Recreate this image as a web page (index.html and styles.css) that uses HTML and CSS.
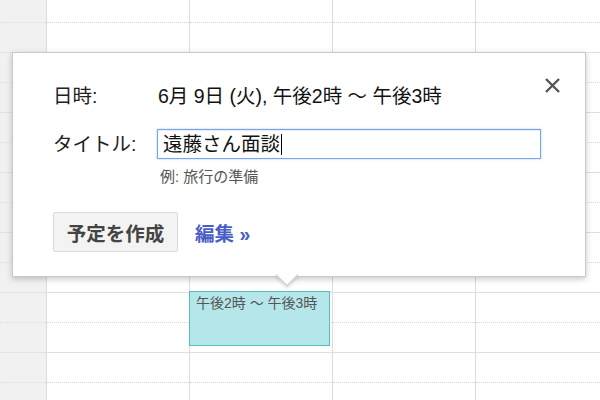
FILE: index.html
```html
<!DOCTYPE html>
<html lang="ja">
<head>
<meta charset="utf-8">
<link rel="stylesheet" href="styles.css">
</head>
<body>
<div class="cal">
  <div class="gutter">
    <div class="hour"><div class="half"></div></div>
    <div class="hour"><div class="half"></div></div>
    <div class="hour"><div class="half"></div></div>
    <div class="hour"><div class="half"></div></div>
    <div class="hour"><div class="half"></div></div>
    <div class="hour"><div class="half"></div></div>
    <div class="hour"><div class="half"></div></div>
  </div>
  <div class="day">
    <div class="hour"><div class="half"></div></div>
    <div class="hour"><div class="half"></div></div>
    <div class="hour"><div class="half"></div></div>
    <div class="hour"><div class="half"></div></div>
    <div class="hour"><div class="half"></div></div>
    <div class="hour"><div class="half"></div></div>
    <div class="hour"><div class="half"></div></div>
  </div>
  <div class="day has-event">
    <div class="hour"><div class="half"></div></div>
    <div class="hour"><div class="half"></div></div>
    <div class="hour"><div class="half"></div></div>
    <div class="hour"><div class="half"></div></div>
    <div class="hour"><div class="half"></div></div>
    <div class="hour"><div class="half"></div></div>
    <div class="hour"><div class="half"></div></div>
    <div class="event">午後2時 ～ 午後3時</div>
  </div>
  <div class="day">
    <div class="hour"><div class="half"></div></div>
    <div class="hour"><div class="half"></div></div>
    <div class="hour"><div class="half"></div></div>
    <div class="hour"><div class="half"></div></div>
    <div class="hour"><div class="half"></div></div>
    <div class="hour"><div class="half"></div></div>
    <div class="hour"><div class="half"></div></div>
  </div>
  <div class="day">
    <div class="hour"><div class="half"></div></div>
    <div class="hour"><div class="half"></div></div>
    <div class="hour"><div class="half"></div></div>
    <div class="hour"><div class="half"></div></div>
    <div class="hour"><div class="half"></div></div>
    <div class="hour"><div class="half"></div></div>
    <div class="hour"><div class="half"></div></div>
  </div>
</div>

<div class="popup">
  <button class="close" aria-label="閉じる">
    <svg width="17" height="17" viewBox="0 0 17 17"><path d="M2 2 L15 15 M15 2 L2 15" stroke="#555" stroke-width="2.4" fill="none"/></svg>
  </button>
  <div class="row">
    <div class="label">日時:</div>
    <div class="value">6月 9日 (火), 午後2時 ～ 午後3時</div>
  </div>
  <div class="row row-title">
    <div class="label">タイトル:</div>
    <div class="field"><span class="field-text">遠藤さん面談</span><span class="caret"></span></div>
  </div>
  <div class="hint">例: 旅行の準備</div>
  <div class="actions">
    <button class="btn">予定を作成</button>
    <a class="edit-link" href="#">編集 »</a>
  </div>
</div>
</body>
</html>
```

FILE: styles.css
```css
html, body {
  margin: 0;
  padding: 0;
  background: #fff;
}
body {
  position: relative;
  width: 600px;
  height: 400px;
  overflow: hidden;
  font-family: "Liberation Sans", "Noto Sans CJK JP", sans-serif;
  color: #222;
}

/* calendar grid */
.cal {
  display: flex;
  margin-top: -7px;
  height: 420px;
}
.gutter {
  width: 47px;
  flex: none;
  box-sizing: border-box;
  background: #f1f1f1;
  border-right: 1px solid #dcdcdc;
}
.day {
  width: 143px;
  flex: none;
  box-sizing: border-box;
  border-right: 1px solid #dcdcdc;
}
.has-event {
  position: relative;
}
.hour {
  height: 60px;
  box-sizing: border-box;
  border-bottom: 1px solid #e0e0e0;
}
.half {
  height: 30px;
  box-sizing: border-box;
  border-bottom: 1px dotted #d6d6d6;
}
.gutter .hour {
  border-bottom-color: #e2e2e2;
}
.gutter .half {
  border-bottom-color: #dedede;
}
.event {
  position: absolute;
  left: -1px;
  top: 298px;
  width: 141px;
  height: 55px;
  box-sizing: border-box;
  background: #b5e6ea;
  border: 1px solid #56bdbd;
  padding: 2px 0 0 6px;
  font-size: 14px;
  line-height: 18px;
  color: #555;
  white-space: nowrap;
}

/* popup */
.popup {
  position: absolute;
  left: 12px;
  top: 52px;
  width: 574px;
  height: 225px;
  box-sizing: border-box;
  background: #fff;
  border: 1px solid #c9c9c9;
  box-shadow: 0 2px 6px rgba(0, 0, 0, 0.22);
  padding: 33px 0 0 40px;
}
.popup::after {
  content: "";
  position: absolute;
  left: 266px;
  top: 214px;
  width: 15px;
  height: 15px;
  background: #fff;
  border-right: 1px solid #c9c9c9;
  border-bottom: 1px solid #c9c9c9;
  transform: rotate(45deg);
  box-shadow: 2px 2px 3px rgba(0, 0, 0, 0.12);
}
.close {
  position: absolute;
  top: 24px;
  right: 24px;
  width: 17px;
  height: 17px;
  padding: 0;
  border: 0;
  background: none;
  display: flex;
}
.row {
  display: flex;
  align-items: center;
  font-size: 19.5px;
  line-height: 20px;
}
.label {
  width: 105px;
  flex: none;
  color: #222;
}
.value {
  color: #111;
}
.row-title {
  margin-top: 23px;
}
.field {
  width: 384px;
  height: 30px;
  margin-left: -1px;
  box-sizing: border-box;
  border: 1px solid #78a6e6;
  box-shadow: 0 0 2px rgba(77, 144, 254, 0.5), inset 0 1px 1px rgba(0, 0, 0, 0.08);
  display: flex;
  align-items: center;
  padding-left: 5px;
  font-size: 19.5px;
  color: #111;
}
.caret {
  width: 1px;
  height: 21px;
  background: #000;
  margin-left: 1px;
}
.hint {
  margin: 10px 0 0 107px;
  font-size: 15px;
  line-height: 16px;
  color: #555;
}
.actions {
  margin-top: 27px;
  display: flex;
  align-items: center;
}
.btn {
  height: 40px;
  width: 125px;
  box-sizing: border-box;
  padding: 0;
  border: 1px solid #dadada;
  border-radius: 2px;
  background: #f3f3f3;
  font-family: "Liberation Sans", "Noto Sans CJK JP", sans-serif;
  font-weight: bold;
  font-size: 19.5px;
  color: #444;
}
.edit-link {
  margin-left: 17px;
  font-size: 19.5px;
  font-weight: bold;
  color: #4a5dc4;
  text-decoration: none;
}
```
